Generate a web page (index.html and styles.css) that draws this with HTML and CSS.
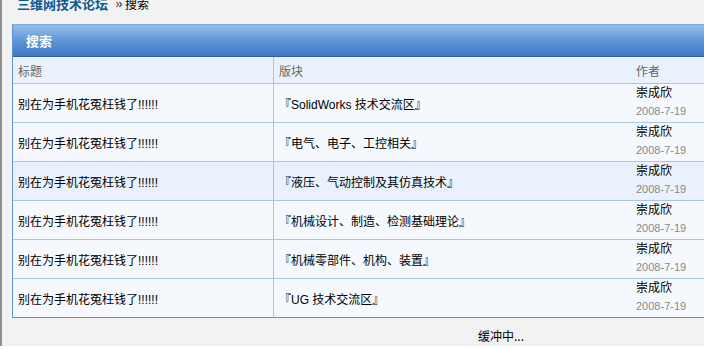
FILE: index.html
```html
<!DOCTYPE html>
<html>
<head>
<meta charset="utf-8">
<link rel="stylesheet" href="styles.css">
</head>
<body>
<div class="page">
  <div class="crumb">
    <a class="home">三维网技术论坛</a>
    <svg class="sep" width="7" height="7" viewBox="0 0 7 7"><path d="M0.5 1 L2.5 3.5 L0.5 6" fill="none" stroke="#b5651d" stroke-width="1.3"/><path d="M3.5 1 L5.5 3.5 L3.5 6" fill="none" stroke="#2a5fa8" stroke-width="1.3"/></svg>
    <span class="cur">搜索</span>
  </div>
  <div class="box">
    <div class="boxhead">搜索</div>
    <table class="list">
      <thead>
        <tr><th class="c1">标题</th><th class="c2">版块</th><th class="c3">作者</th></tr>
      </thead>
      <tbody>
        <tr><td class="c1">别在为手机花冤枉钱了!!!!!!</td><td class="c2">『SolidWorks 技术交流区』</td><td class="c3"><div class="name">崇成欣</div><div class="date">2008-7-19</div></td></tr>
        <tr><td class="c1">别在为手机花冤枉钱了!!!!!!</td><td class="c2">『电气、电子、工控相关』</td><td class="c3"><div class="name">崇成欣</div><div class="date">2008-7-19</div></td></tr>
        <tr class="hl"><td class="c1">别在为手机花冤枉钱了!!!!!!</td><td class="c2">『液压、气动控制及其仿真技术』</td><td class="c3"><div class="name">崇成欣</div><div class="date">2008-7-19</div></td></tr>
        <tr><td class="c1">别在为手机花冤枉钱了!!!!!!</td><td class="c2">『机械设计、制造、检测基础理论』</td><td class="c3"><div class="name">崇成欣</div><div class="date">2008-7-19</div></td></tr>
        <tr><td class="c1">别在为手机花冤枉钱了!!!!!!</td><td class="c2">『机械零部件、机构、装置』</td><td class="c3"><div class="name">崇成欣</div><div class="date">2008-7-19</div></td></tr>
        <tr class="last"><td class="c1">别在为手机花冤枉钱了!!!!!!</td><td class="c2">『UG 技术交流区』</td><td class="c3"><div class="name">崇成欣</div><div class="date">2008-7-19</div></td></tr>
      </tbody>
    </table>
  </div>
  <div class="loading">缓冲中...</div>
</div>
</body>
</html>
```
FILE: styles.css
```css
html {
  background: #ffffff;
  margin: 0;
  padding: 0;
}
body {
  margin: 0;
  padding: 0;
  overflow: hidden;
  font-family: "Liberation Sans", "Noto Sans CJK SC", sans-serif;
  font-size: 12px;
  color: #000;
}
.page {
  height: 346px;
  width: 1000px;
  background: #f2f2f2;
  border-left: 2px solid #8f8f8f;
  box-sizing: border-box;
  overflow: hidden;
}
.crumb {
  margin-top: -6px;
  height: 20px;
  line-height: 20px;
  padding-left: 15px;
  display: flex;
  align-items: center;
  white-space: nowrap;
}
.home {
  font-family: "Noto Sans CJK SC", sans-serif;
  font-size: 13px;
  font-weight: bold;
  color: #0d5a91;
}
.sep {
  margin-left: 8px;
  margin-right: 2px;
  margin-top: 1px;
}
.cur {
  font-family: "Noto Sans CJK SC", sans-serif;
  font-size: 12px;
}
.box {
  margin-top: 10px;
  margin-left: 10px;
  width: 976px;
  border: 1px solid #5f95d6;
  border-top-color: #7aaee2;
  background: #f5f9fe;
}
.boxhead {
  height: 31px;
  line-height: 31px;
  border-bottom: 1px solid #2a62ae;
  background: linear-gradient(to bottom, #93bde9 0%, #80b0e2 20%, #5b92d3 55%, #3f79c2 100%);
  color: #fff;
  font-family: "Noto Sans CJK SC", sans-serif;
  font-weight: bold;
  font-size: 13px;
  padding-left: 13px;
}
.list {
  width: 100%;
  border-collapse: collapse;
  table-layout: fixed;
}
.list th {
  height: 26px;
  padding: 0 5px;
  text-align: left;
  font-weight: normal;
  color: #666;
  background: #e9f2fc;
  border-bottom: 1px solid #a9c6e7;
  font-family: "Noto Sans CJK SC", sans-serif;
  font-size: 12px;
}
.list th.c1, .list td.c1 {
  width: 250px;
  border-right: 1px solid #a9c6e7;
}
.list th.c2, .list td.c2 {
  width: 346px;
}
.list th.c3 {
  padding-left: 6px;
}
.list td {
  height: 38px;
  padding: 0 5px;
  border-bottom: 1px solid #a9c6e7;
  vertical-align: middle;
  white-space: nowrap;
}
.list tr.last td {
  border-bottom: none;
}
.list tr.hl td {
  background: #e9f2fc;
}
.list td.c3 {
  vertical-align: top;
  padding-left: 6px;
}
.name {
  line-height: 16px;
  font-family: "Noto Sans CJK SC", sans-serif;
}
.date {
  line-height: 22px;
  font-size: 11px;
  color: #888;
  font-family: "Liberation Sans", sans-serif;
}
.loading {
  margin-top: 8px;
  line-height: 20px;
  padding-left: 476px;
  font-family: "Noto Sans CJK SC", sans-serif;
}
```
